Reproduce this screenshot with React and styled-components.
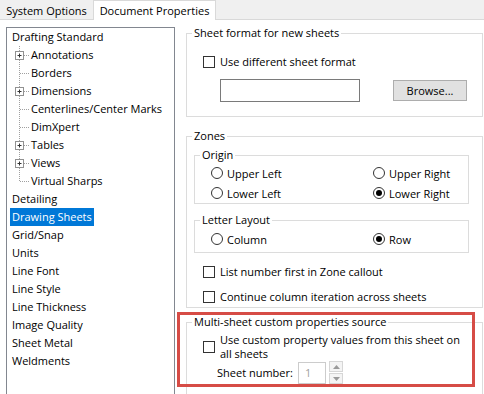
import React from 'react';
import styled, { createGlobalStyle } from 'styled-components';

const GlobalStyle = createGlobalStyle`
  html, body {
    margin: 0;
    padding: 0;
    background: #fff;
  }
  body {
    font-family: 'Open Sans', 'Noto Sans', sans-serif;
    font-size: 11px;
    color: #000;
  }
  * {
    box-sizing: border-box;
  }
`;

const Window = styled.div`
  position: relative;
  width: 484px;
  height: 394px;
  overflow: hidden;
  background: #fff;
`;

const TabStrip = styled.div`
  display: flex;
  align-items: flex-end;
  height: 20px;
  background: #f0f0f0;
  border-bottom: 1px solid #d9d9d9;
`;

const Tab = styled.div`
  display: flex;
  align-items: center;
  justify-content: center;
  width: ${({ $w }) => $w}px;
  height: ${({ $active }) => ($active ? 20 : 18)}px;
  margin-bottom: ${({ $active }) => ($active ? -1 : 0)}px;
  background: ${({ $active }) => ($active ? '#fff' : '#f0f0f0')};
  border: 1px solid ${({ $active }) => ($active ? '#d9d9d9' : 'transparent')};
  border-bottom: none;
  white-space: nowrap;
`;

const Body = styled.div`
  display: flex;
  align-items: flex-start;
`;

const Tree = styled.ul`
  flex: none;
  width: 169px;
  height: 380px;
  margin: 7px 0 0 6px;
  padding: 0;
  list-style: none;
  border: 1px solid #828790;
`;

const TreeRow = styled.li`
  display: flex;
  align-items: center;
  height: 18px;
  padding-left: 3px;
`;

const TreeLabel = styled.span`
  padding: 0 2px;
  line-height: 18px;
  white-space: nowrap;
  background: ${({ $selected }) => ($selected ? '#0078d7' : 'transparent')};
  color: ${({ $selected }) => ($selected ? '#fff' : '#000')};
`;

const RightCol = styled.div`
  display: flex;
  flex-direction: column;
  flex: none;
  width: 297px;
  margin-left: 11px;
`;

const Group = styled.fieldset`
  min-width: 0;
  margin: ${({ $mt }) => $mt}px ${({ $mr = 0 }) => $mr}px 0 ${({ $ml = 0 }) => $ml}px;
  padding: 0 0 ${({ $pb = 0 }) => $pb}px;
  border: 1px solid #dcdcdc;
`;

const Legend = styled.legend`
  margin-left: 5px;
  padding: 0 2px;
  line-height: 14px;
  white-space: nowrap;
`;

const CheckRow = styled.label`
  display: flex;
  align-items: center;
  gap: 5px;
  min-height: 16px;
  margin: ${({ $mt }) => $mt}px 0 0 16px;
  line-height: 14px;
`;

const Box = styled.span`
  flex: none;
  width: 12px;
  height: 12px;
  border: 1px solid #333;
  background: #fff;
`;

const FileRow = styled.div`
  display: flex;
  align-items: center;
  gap: 33px;
  margin: 9px 0 0 33px;
`;

const TextInput = styled.div`
  width: 140px;
  height: 23px;
  border: 1px solid #7a7a7a;
  background: #fff;
`;

const Button = styled.div`
  display: flex;
  align-items: center;
  justify-content: center;
  width: 74px;
  height: 21px;
  border: 1px solid #adadad;
  background: #e1e1e1;
`;

const RadioGrid = styled.div`
  display: grid;
  grid-template-columns: 162px 1fr;
  grid-auto-rows: 20px;
  padding: ${({ $pt }) => $pt}px 0 ${({ $pb = 0 }) => $pb}px 16px;
`;

const RadioItem = styled.label`
  display: flex;
  align-items: center;
  gap: 4px;
  white-space: nowrap;
`;

const Circle = styled.span`
  position: relative;
  flex: none;
  width: 12px;
  height: 12px;
  border: 1px solid #333;
  border-radius: 50%;
  background: #fff;
  &::after {
    content: '';
    display: ${({ $on }) => ($on ? 'block' : 'none')};
    position: absolute;
    left: 2px;
    top: 2px;
    width: 6px;
    height: 6px;
    border-radius: 50%;
    background: #000;
  }
`;

const NumberRow = styled.div`
  display: flex;
  align-items: center;
  margin: 0 0 0 30px;
`;

const NumberLabel = styled.span`
  width: 81px;
`;

const NumberInput = styled.div`
  display: flex;
  align-items: center;
  width: 28px;
  height: 22px;
  padding-left: 6px;
  border: 1px solid #cccccc;
  color: #a0a0a0;
`;

const Spinner = styled.div`
  display: flex;
  flex-direction: column;
  gap: 1px;
  margin-left: 3px;
`;

const SpinButton = styled.div`
  display: flex;
  align-items: center;
  justify-content: center;
  width: 14px;
  height: 11px;
  border: 1px solid #d6d6d6;
  background: #f4f4f4;
`;

const Highlight = styled.div`
  position: absolute;
  left: 177px;
  top: 312px;
  width: 298px;
  height: 75px;
  border: 3px solid #d64c46;
  pointer-events: none;
`;

const treeItems = [
  { label: 'Drafting Standard' },
  { label: 'Annotations', child: true, plus: true },
  { label: 'Borders', child: true },
  { label: 'Dimensions', child: true, plus: true },
  { label: 'Centerlines/Center Marks', child: true },
  { label: 'DimXpert', child: true },
  { label: 'Tables', child: true, plus: true },
  { label: 'Views', child: true, plus: true },
  { label: 'Virtual Sharps', child: true, last: true },
  { label: 'Detailing' },
  { label: 'Drawing Sheets', selected: true },
  { label: 'Grid/Snap' },
  { label: 'Units' },
  { label: 'Line Font' },
  { label: 'Line Style' },
  { label: 'Line Thickness' },
  { label: 'Image Quality' },
  { label: 'Sheet Metal' },
  { label: 'Weldments' },
];

const Connector = ({ plus, last }) => (
  <svg width="19" height="18" viewBox="0 0 19 18" style={{ flex: 'none' }}>
    <g stroke="#a0a0a0" strokeWidth="1" strokeDasharray="1 1">
      <line x1="9.5" y1="0" x2="9.5" y2={last ? 9 : 18} />
      <line x1="10" y1="9.5" x2="19" y2="9.5" />
    </g>
    {plus && (
      <g>
        <rect x="5.5" y="5.5" width="8" height="8" fill="#fff" stroke="#919191" />
        <line x1="7.5" y1="9.5" x2="11.5" y2="9.5" stroke="#333" />
        <line x1="9.5" y1="7.5" x2="9.5" y2="11.5" stroke="#333" />
      </g>
    )}
  </svg>
);

const Arrow = ({ up }) => (
  <svg width="7" height="4" viewBox="0 0 7 4">
    <path d={up ? 'M0 4 L3.5 0 L7 4 Z' : 'M0 0 L3.5 4 L7 0 Z'} fill="#9a9a9a" />
  </svg>
);

const Radio = ({ on, children }) => (
  <RadioItem>
    <Circle $on={on} />
    {children}
  </RadioItem>
);

const Check = ({ mt, children }) => (
  <CheckRow $mt={mt}>
    <Box />
    <span>{children}</span>
  </CheckRow>
);

const App = () => {
  return (
    <>
      <GlobalStyle />
      <Window>
        <TabStrip>
          <Tab $w={93}>System Options</Tab>
          <Tab $w={123} $active>
            Document Properties
          </Tab>
        </TabStrip>
        <Body>
          <Tree>
            {treeItems.map((item) => (
              <TreeRow key={item.label}>
                {item.child && <Connector plus={item.plus} last={item.last} />}
                <TreeLabel $selected={item.selected}>{item.label}</TreeLabel>
              </TreeRow>
            ))}
          </Tree>
          <RightCol>
            <Group $mt={6} $pb={14}>
              <Legend>Sheet format for new sheets</Legend>
              <Check mt={14}>Use different sheet format</Check>
              <FileRow>
                <TextInput />
                <Button>Browse...</Button>
              </FileRow>
            </Group>

            <Group $mt={12} $pb={2}>
              <Legend>Zones</Legend>
              <Group $mt={5} $ml={7} $mr={13}>
                <Legend>Origin</Legend>
                <RadioGrid $pt={1}>
                  <Radio>Upper Left</Radio>
                  <Radio>Upper Right</Radio>
                  <Radio>Lower Left</Radio>
                  <Radio on>Lower Right</Radio>
                </RadioGrid>
              </Group>
              <Group $mt={9} $ml={7} $mr={13}>
                <Legend>Letter Layout</Legend>
                <RadioGrid $pt={2} $pb={3}>
                  <Radio>Column</Radio>
                  <Radio on>Row</Radio>
                </RadioGrid>
              </Group>
              <Check mt={11}>List number first in Zone callout</Check>
              <Check mt={9}>Continue column iteration across sheets</Check>
            </Group>

            <Group $mt={7} $pb={14}>
              <Legend>Multi-sheet custom properties source</Legend>
              <Check mt={4}>
                Use custom property values from this sheet on
                <br />
                all sheets
              </Check>
              <NumberRow>
                <NumberLabel>Sheet number:</NumberLabel>
                <NumberInput>1</NumberInput>
                <Spinner>
                  <SpinButton>
                    <Arrow up />
                  </SpinButton>
                  <SpinButton>
                    <Arrow />
                  </SpinButton>
                </Spinner>
              </NumberRow>
            </Group>
          </RightCol>
        </Body>
        <Highlight />
      </Window>
    </>
  );
};

export default App;
